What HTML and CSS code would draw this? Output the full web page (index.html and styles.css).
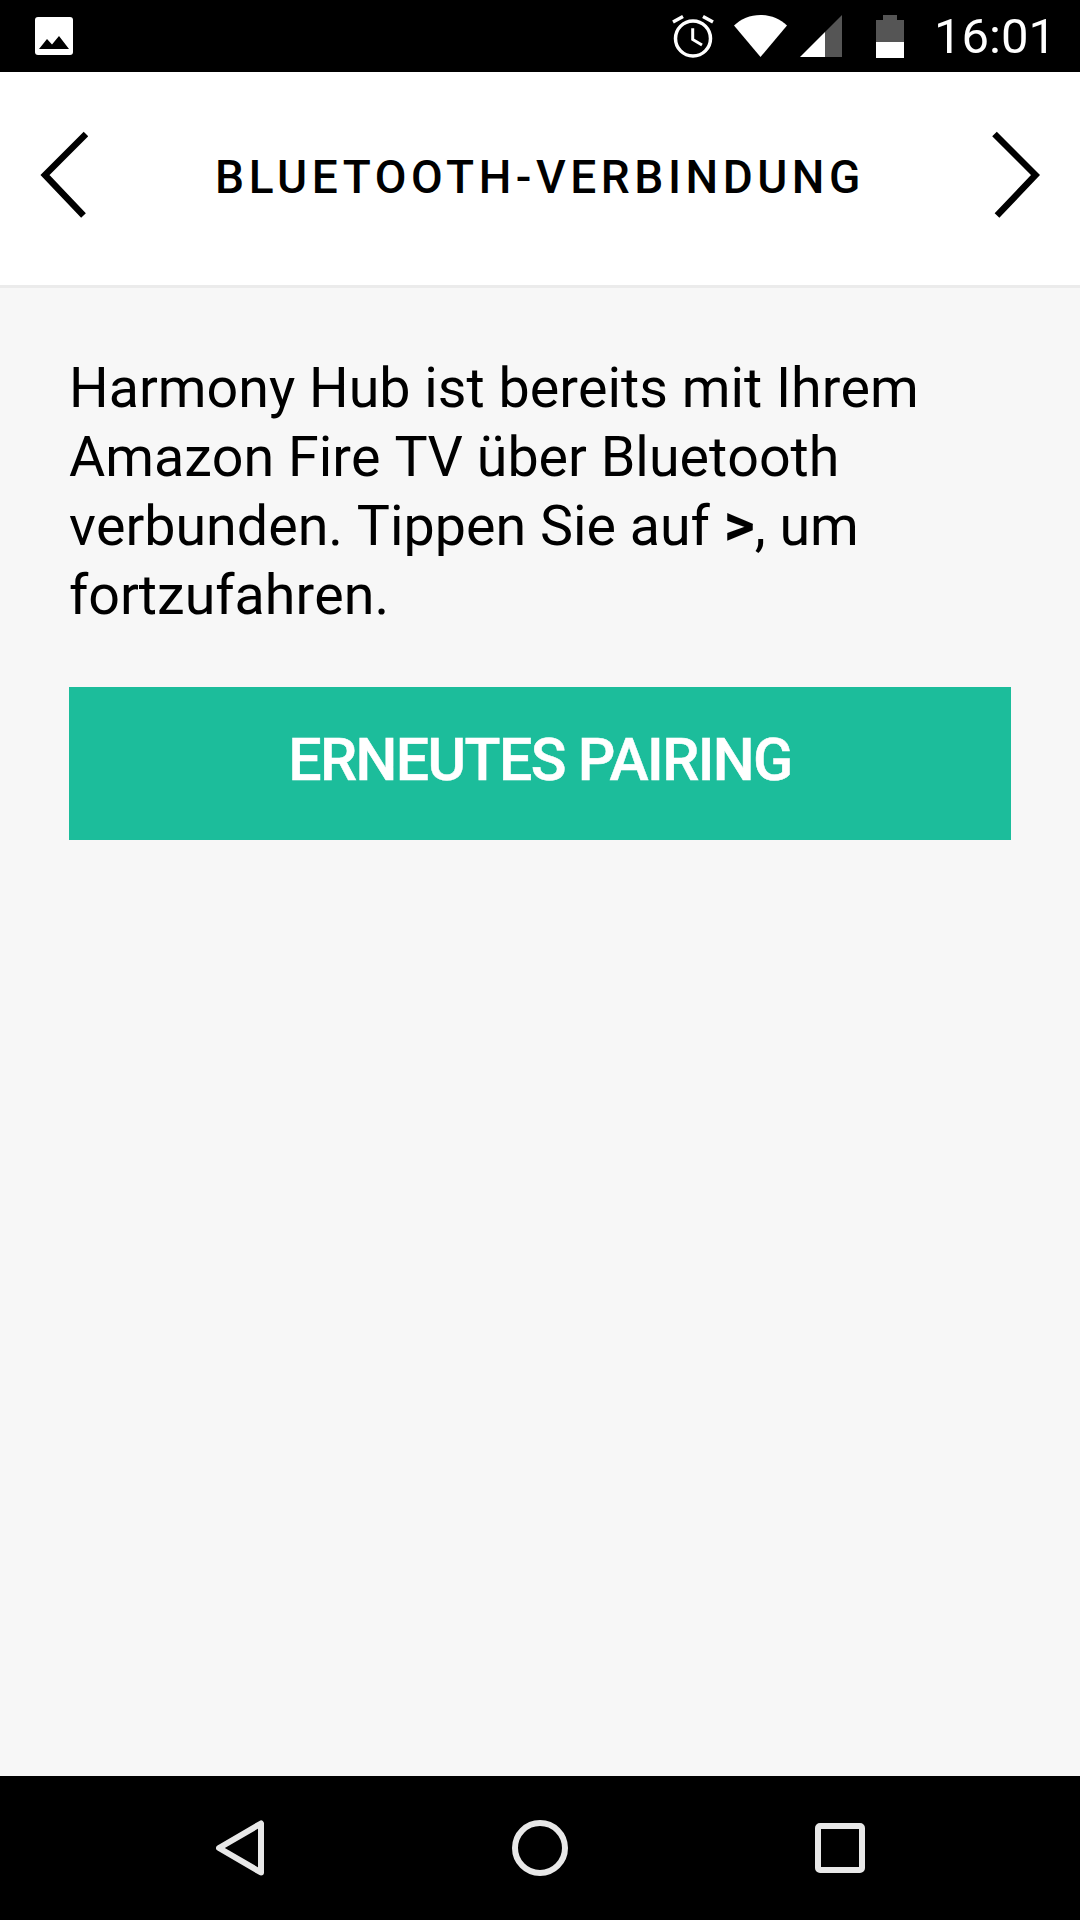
FILE: index.html
```html
<!DOCTYPE html>
<html lang="de">
<head>
    <meta charset="UTF-8">
    <meta name="viewport" content="width=device-width, initial-scale=1.0">
    <title>Bluetooth-Verbindung</title>
    <link rel="stylesheet" href="styles.css">
</head>
<body>

<div class="screen">
    <div class="statusbar">
        <svg class="icon-picture" width="38" height="38" viewBox="0 0 38 38">
            <path fill="#fff" d="M3 0H35A3 3 0 0 1 38 3V35A3 3 0 0 1 35 38H3A3 3 0 0 1 0 35V3A3 3 0 0 1 3 0Z"/>
            <path fill="#000" d="M4 32L12 22L17 27.500L24 19L34 32Z"/>
        </svg>
        <div class="status-right">
            <svg class="icon-alarm" width="44" height="44" viewBox="0 0 44 44">
                <circle cx="22" cy="24.500" r="17.500" fill="none" stroke="#fff" stroke-width="3.500"/>
                <path fill="none" stroke="#fff" stroke-width="3" d="M21.700 14.300V25.500L31 31"/>
                <path fill="none" stroke="#fff" stroke-width="3.500" d="M2 8L12 2.500M32 2.500L42 8"/>
            </svg>
            <svg class="icon-wifi" width="53" height="42" viewBox="0 0 53 42">
                <path fill="#fff" d="M0 10.500C7 4 16 0 26.500 0S46 4 53 10.500L26.500 42Z"/>
            </svg>
            <svg class="icon-signal" width="42" height="42" viewBox="0 0 42 42">
                <path fill="#555" d="M42 0V42H25V17Z"/>
                <path fill="#fff" d="M25 17V42H0Z"/>
            </svg>
            <svg class="icon-battery" width="28" height="43" viewBox="0 0 28 43">
                <path fill="#555" d="M0 5H7V0H21V5H28V27H0Z"/>
                <rect fill="#fff" x="0" y="27" width="28" height="16"/>
            </svg>
            <span class="clock">16:01</span>
        </div>
    </div>

    <div class="header">
        <svg class="chevron" width="48" height="90" viewBox="0 0 48 90">
            <path fill="none" stroke="#000" stroke-width="6.500" d="M46 4L5 45L43.500 85.500"/>
        </svg>
        <h1 class="title">BLUETOOTH-VERBINDUNG</h1>
        <svg class="chevron" width="48" height="90" viewBox="0 0 48 90">
            <path fill="none" stroke="#000" stroke-width="6.500" d="M2.500 4L43.500 45L5 85.500"/>
        </svg>
    </div>

    <div class="content">
        <p class="message">Harmony Hub ist bereits mit Ihrem Amazon Fire TV über Bluetooth verbunden. Tippen Sie auf <b class="key">&gt;</b>, um fortzufahren.</p>
        <div class="pair-btn">ERNEUTES PAIRING</div>
    </div>

    <div class="navbar">
        <svg width="48" height="56" viewBox="0 0 48 56">
            <path fill="none" stroke="#e8e8e8" stroke-width="6" stroke-linejoin="round" d="M45 3.500V52.500L3 28Z"/>
        </svg>
        <svg width="56" height="56" viewBox="0 0 56 56">
            <circle cx="28" cy="28" r="25" fill="none" stroke="#e8e8e8" stroke-width="6"/>
        </svg>
        <svg width="50" height="50" viewBox="0 0 50 50">
            <rect x="3" y="3" width="44" height="44" rx="2" fill="none" stroke="#e8e8e8" stroke-width="6"/>
        </svg>
    </div>
</div>

</body>
</html>
```

FILE: styles.css
```css
body {
    margin: 0;
    font-family: Roboto, sans-serif;
    background-color: #f7f7f7;
}

.screen {
    width: 1080px;
    height: 1920px;
    display: flex;
    flex-direction: column;
}

.statusbar {
    height: 72px;
    background: #000;
    display: flex;
    align-items: center;
    justify-content: space-between;
    padding: 0 24px 0 35px;
    box-sizing: border-box;
    flex-shrink: 0;
}

.status-right {
    display: flex;
    align-items: center;
}

.icon-wifi {
    margin-left: 19px;
}

.icon-signal {
    margin-left: 13px;
}

.icon-battery {
    margin-left: 34px;
}

.clock {
    margin-left: 30px;
    padding-top: 2px;
    color: #fff;
    font-size: 49px;
    line-height: 70px;
}

.header {
    height: 216px;
    background: #fff;
    border-bottom: 3px solid #ebebeb;
    box-sizing: border-box;
    display: flex;
    align-items: center;
    justify-content: space-between;
    padding: 0 40px 7px 40px;
    flex-shrink: 0;
}

.title {
    margin: 3px 0 0;
    font-size: 46px;
    font-weight: 500;
    letter-spacing: 4.55px;
    color: #000;
}

.content {
    flex: 1;
    padding: 0 69px;
}

.message {
    margin: 66px 0 0;
    font-size: 55.6px;
    font-kerning: none;
    line-height: 69px;
    color: #000;
}

.key {
    font-size: 60px;
    line-height: 1;
}

.pair-btn {
    margin-top: 57px;
    height: 153px;
    padding-bottom: 9px;
    box-sizing: border-box;
    background: #1cbd9b;
    color: #fff;
    font-size: 59px;
    font-weight: 500;
    letter-spacing: -1.6px;
    -webkit-text-stroke: 0.5px #fff;
    display: flex;
    align-items: center;
    justify-content: center;
}

.navbar {
    height: 144px;
    background: #000;
    display: flex;
    align-items: center;
    flex-shrink: 0;
    padding: 0 215px 0 216px;
    justify-content: space-between;
}
```
